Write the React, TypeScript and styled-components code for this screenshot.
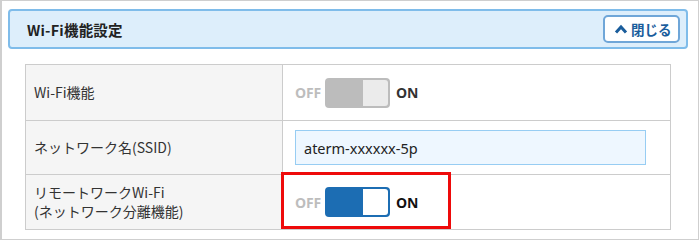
import React from 'react';
import styled, { createGlobalStyle } from 'styled-components';

const Global = createGlobalStyle`
  body {
    margin: 0;
    background: #fff;
    font-family: 'Noto Sans CJK JP', 'Noto Sans', sans-serif;
  }
`;

const S = {
  Frame: styled.div`
    box-sizing: border-box;
    width: 699px;
    height: 240px;
    border: 1px solid #cfcfcf;
    border-left-width: 2px;
    padding: 8px 10px 0 6px;
  `,
  Header: styled.div`
    box-sizing: border-box;
    display: flex;
    align-items: center;
    justify-content: space-between;
    height: 40px;
    padding: 0 6px 0 17px;
    background: #ddeefb;
    border: 2px solid #7fbcea;
    border-radius: 4px;
  `,
  Title: styled.h2`
    margin: 0;
    font-size: 14.5px;
    font-weight: bold;
    color: #222;
    letter-spacing: 0.2px;
  `,
  CloseButton: styled.button`
    box-sizing: border-box;
    display: flex;
    align-items: center;
    gap: 3px;
    width: 77px;
    height: 28px;
    padding: 0 0 0 9px;
    background: #fff;
    border: 2px solid #6fa6d8;
    border-radius: 5px;
    color: #1a5d9c;
    font-family: inherit;
    font-size: 13.5px;
    font-weight: bold;
  `,
  Table: styled.table`
    width: 646px;
    margin: 15px 0 0 17px;
    border-collapse: collapse;
    border: 1px solid #cccccc;
  `,
  Row: styled.tr<{ $h: number }>`
    height: ${(p) => p.$h}px;
    border-top: 1px solid #cccccc;
  `,
  Label: styled.th`
    width: 248px;
    padding: 0 0 0 8px;
    background: #f5f5f5;
    border-right: 1px solid #cccccc;
    text-align: left;
    font-weight: normal;
    font-size: 14px;
    line-height: 19px;
    color: #333;
  `,
  Value: styled.td`
    padding: 0 0 0 12px;
    vertical-align: middle;
  `,
  Switch: styled.div<{ $highlight?: boolean }>`
    position: relative;
    display: flex;
    align-items: center;
    gap: 4px;
    ${(p) =>
      p.$highlight &&
      `&::before {
        content: '';
        position: absolute;
        left: -14px;
        top: -15px;
        width: 164px;
        height: 51px;
        border: 3px solid #ee0a0a;
      }`}
  `,
  SwitchText: styled.span<{ $active: boolean }>`
    font-family: 'Open Sans', 'Noto Sans', sans-serif;
    font-size: 14px;
    font-weight: bold;
    color: ${(p) => (p.$active ? '#111' : '#bdbdbd')};
    letter-spacing: -0.2px;
  `,
  OnText: styled.span<{ $dark: boolean }>`
    font-family: 'Open Sans', 'Noto Sans', sans-serif;
    font-size: 14px;
    font-weight: bold;
    margin-left: 2px;
    color: ${(p) => (p.$dark ? '#111' : '#333')};
  `,
  Track: styled.div<{ $on: boolean }>`
    box-sizing: border-box;
    display: flex;
    justify-content: flex-end;
    width: 65px;
    height: 30px;
    padding: 2px 2px 2px 0;
    border-radius: 4px;
    background: ${(p) => (p.$on ? '#1c6db3' : '#bcbcbc')};
  `,
  Knob: styled.div<{ $on: boolean }>`
    width: 25px;
    height: 100%;
    border-radius: 0 3px 3px 0;
    background: ${(p) => (p.$on ? '#ffffff' : '#ebebeb')};
  `,
  Input: styled.input`
    box-sizing: border-box;
    width: 351px;
    height: 35px;
    padding: 0 8px;
    background: #eef7ff;
    border: 1px solid #97cdf3;
    font-family: 'Noto Sans', 'Noto Sans CJK JP', sans-serif;
    font-size: 14.5px;
    color: #222;
    outline: none;
  `,
};

function Toggle({ on, highlight }: { on: boolean; highlight?: boolean }) {
  return (
    <S.Switch $highlight={highlight}>
      <S.SwitchText $active={false}>OFF</S.SwitchText>
      <S.Track $on={on}>
        <S.Knob $on={on} />
      </S.Track>
      <S.OnText $dark={on}>ON</S.OnText>
    </S.Switch>
  );
}

export default function App() {
  return (
    <>
      <Global />
      <S.Frame>
        <S.Header>
          <S.Title>Wi-Fi機能設定</S.Title>
          <S.CloseButton>
            <svg width="14" height="10" viewBox="0 0 14 10">
              <path d="M2 8.5 L7 3 L12 8.5" fill="none" stroke="#1a5d9c" strokeWidth="3" />
            </svg>
            閉じる
          </S.CloseButton>
        </S.Header>
        <S.Table>
          <tbody>
            <S.Row $h={56}>
              <S.Label>Wi-Fi機能</S.Label>
              <S.Value>
                <Toggle on={false} />
              </S.Value>
            </S.Row>
            <S.Row $h={54}>
              <S.Label>ネットワーク名(SSID)</S.Label>
              <S.Value>
                <S.Input defaultValue="aterm-xxxxxx-5p" />
              </S.Value>
            </S.Row>
            <S.Row $h={55}>
              <S.Label>
                リモートワークWi-Fi
                <br />
                (ネットワーク分離機能)
              </S.Label>
              <S.Value>
                <Toggle on highlight />
              </S.Value>
            </S.Row>
          </tbody>
        </S.Table>
      </S.Frame>
    </>
  );
}
